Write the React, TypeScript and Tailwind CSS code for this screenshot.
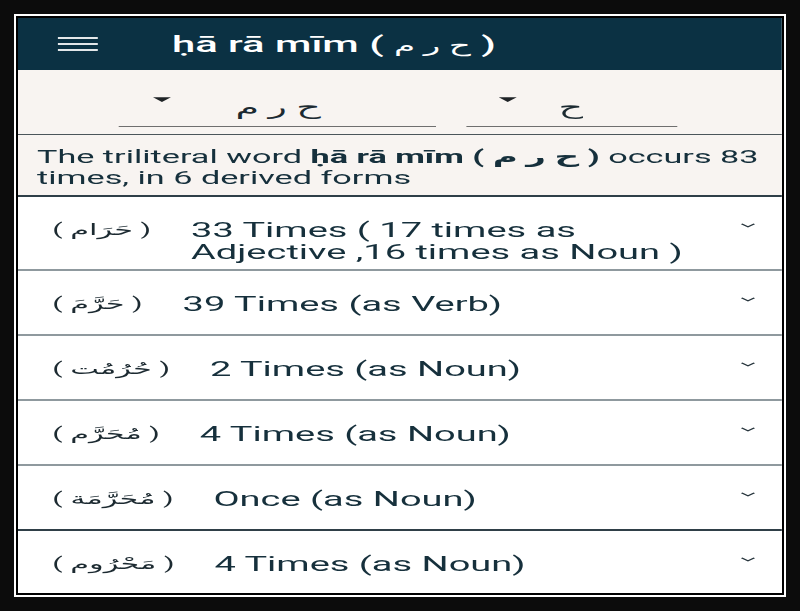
import React from 'react';

type Row = {
  ar: string;
  text: string;
  h: string;
  line: string;
};

const rows: Row[] = [
  { ar: 'حَرَام', text: '33 Times ( 17 times as Adjective ,16 times as Noun )', h: 'h-[74px]', line: 'border-b-2 border-[#8f999e]' },
  { ar: 'حَرَّمَ', text: '39 Times (as Verb)', h: 'h-[65px]', line: 'border-b-2 border-[#8f999e]' },
  { ar: 'حُرُمُت', text: '2 Times (as Noun)', h: 'h-[65px]', line: 'border-b-2 border-[#8f999e]' },
  { ar: 'مُحَرَّم', text: '4 Times (as Noun)', h: 'h-[65px]', line: 'border-b-2 border-[#8f999e]' },
  { ar: 'مُحَرَّمَة', text: 'Once (as Noun)', h: 'h-[65px]', line: 'border-b-2 border-[#2f3f48]' },
  { ar: 'مَحْرُوم', text: '4 Times (as Noun)', h: 'h-[65px]', line: '' },
];

function Caret() {
  return (
    <svg width="9.5" height="5" viewBox="0 0 10 5" className="shrink-0">
      <polygon points="0,0 10,0 5,5" fill="#1f2326" />
    </svg>
  );
}

function Chevron() {
  return (
    <svg width="8.4" height="5" viewBox="0 0 10 6" className="shrink-0 mt-[4px]">
      <path d="M1 1 L5 4.6 L9 1" fill="none" stroke="#26343c" strokeWidth="1.4" />
    </svg>
  );
}

export default function App() {
  return (
    <div className="w-[800px] h-[611px] bg-[#0c0c0c] p-[14px]">
      <div className="h-full border-2 border-white bg-black p-[2px]">
        <div className="w-[764px] h-[575px] overflow-hidden bg-white">
          {/* phone screen, stretched horizontally like the capture */}
          <div className="w-[402px] origin-top-left scale-x-[1.9] font-['Roboto','DejaVu_Sans',sans-serif] text-[#16303c]">
            {/* Header */}
            <header className="h-[52px] bg-[#0b3143] flex items-center pl-[21px]">
              <div className="w-[21px] flex flex-col gap-[4px]">
                <span className="h-[2px] bg-[#e3e7e9]" />
                <span className="h-[2px] bg-[#e3e7e9]" />
                <span className="h-[2px] bg-[#e3e7e9]" />
              </div>
              <h1 className="ml-[39px] text-[22px] font-medium text-white whitespace-nowrap">
                ḥā rā mīm ( <span className="text-[18px]">ح ر م</span> )
              </h1>
            </header>

            {/* Root letter pickers */}
            <div className="h-[65px] bg-[#f8f4f1] border-b border-[#4b555a] flex items-start pl-[53px] gap-[16px] pt-[17px]">
              <div className="w-[167px] h-[40px] border-b border-[#6f6f6f] flex items-center pl-[18px]">
                <span className="self-start mt-[10px]"><Caret /></span>
                <span className="ml-[34px] text-[20px] leading-none text-[#1c2a31]">ح ر م</span>
              </div>
              <div className="w-[111px] h-[40px] border-b border-[#6f6f6f] flex items-center pl-[17px]">
                <span className="self-start mt-[10px]"><Caret /></span>
                <span className="ml-[22px] text-[20px] leading-none text-[#1c2a31]">ح</span>
              </div>
            </div>

            {/* Summary */}
            <div className="h-[62px] bg-[#f8f4f1] border-b-2 border-[#2f3f48] px-[10px] pt-[11px] text-[18px] leading-[21px]">
              The triliteral word <b>ḥā rā mīm ( ح ر م )</b> occurs 83 times, in 6 derived forms
            </div>

            {/* Derived forms */}
            {rows.map((r, i) => (
              <div key={i} className={`${r.h} ${r.line} flex items-start pl-[18px] pr-[14px] pt-[22px]`}>
                <span className="text-[16px] leading-[22px] whitespace-nowrap text-[#1c2a31]">( {r.ar} )</span>
                <span className="ml-[21px] flex-1 max-w-[270px] text-[20px] leading-[22px]">{r.text}</span>
                <span className="ml-auto"><Chevron /></span>
              </div>
            ))}
          </div>
        </div>
      </div>
    </div>
  );
}
